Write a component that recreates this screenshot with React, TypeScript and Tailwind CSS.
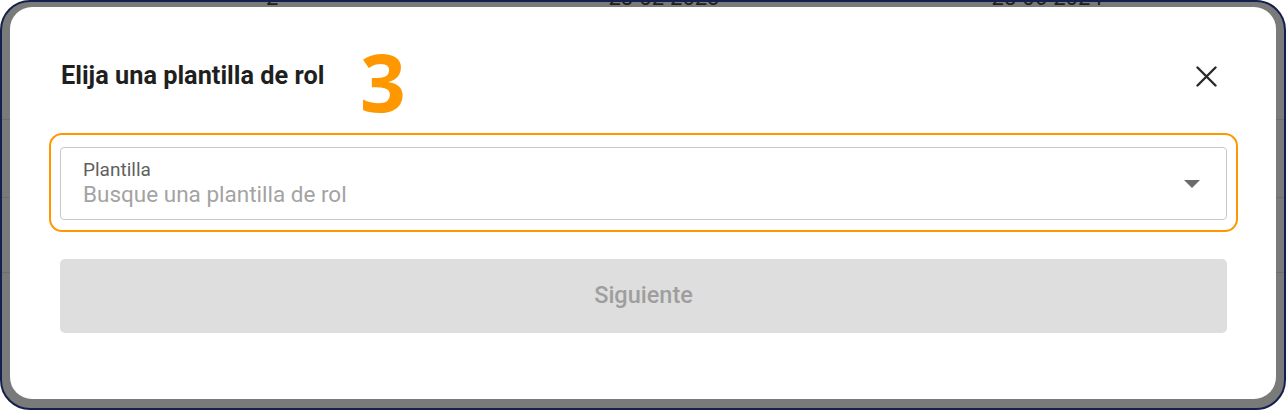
import React from "react";

export default function App() {
  return (
    <div className="h-[410px] w-[1286px] bg-white" style={{ fontFamily: "Roboto, 'Liberation Sans', sans-serif" }}>
      <div className="relative h-[410px] w-[1286px] overflow-hidden rounded-[30px] border-2 border-[#14214c] bg-[#7a7a7a]">
        {/* dimmed page behind the modal */}
        <div className="-mt-[17px] text-[22px] text-[#1e1e1e]">
          <div className="flex h-[25px] items-center leading-[25px]">
            <span className="ml-[258px]">-2</span>
            <span className="ml-[330px]">28-02-2023</span>
            <span className="ml-[272px]">28-06-2024</span>
          </div>
          <div className="h-[110px] border-b border-[#6e6e6e]" />
          <div className="h-[78px] border-b border-[#6e6e6e]" />
          <div className="h-[75px] border-b border-[#6e6e6e]" />
        </div>

        {/* modal */}
        <div className="absolute left-[8px] top-[5px] h-[392px] w-[1266px] rounded-[22px] bg-white">
          <span
            className="absolute left-[350px] top-[34px] text-[80px] font-bold leading-none text-[#ff9800]"
            style={{ fontFamily: "'Open Sans', sans-serif" }}
          >
            3
          </span>
          <div className="flex flex-col pl-[39px] pr-[38px] pt-[55px]">
            <div className="flex h-[28px] items-center justify-between pl-[12px] pr-[21px]">
              <h2 className="text-[25.3px] font-bold leading-[28px] text-[#1f1f1f]">Elija una plantilla de rol</h2>
              <svg width="21" height="21" viewBox="0 0 21 21" className="text-[#2a2a2a]">
                <path d="M1.5 1.5L19.5 19.5M19.5 1.5L1.5 19.5" stroke="currentColor" strokeWidth="2.4" strokeLinecap="round" />
              </svg>
            </div>

            <div className="mt-[43px] rounded-[13px] border-2 border-[#ff9800] px-[9px] pb-[10px] pt-[12px]">
              <div className="flex h-[73px] items-center justify-between rounded-[4px] border border-[#c8c8c8] pl-[22px] pr-[26px]">
                <div className="flex flex-col">
                  <span className="text-[19px] leading-[20px] text-[#5f5f5f]">Plantilla</span>
                  <span className="text-[22.5px] leading-[28px] text-[#a3a3a3]">Busque una plantilla de rol</span>
                </div>
                <svg width="16" height="8" viewBox="0 0 16 8" className="text-[#6b6b6b]">
                  <path d="M0 0H16L8 8Z" fill="currentColor" />
                </svg>
              </div>
            </div>

            <div className="mx-[11px] mt-[27px] flex h-[74px] items-center justify-center rounded-[5px] bg-[#dedede]">
              <span className="text-[23.5px] font-medium text-[#9e9e9e]">Siguiente</span>
            </div>
          </div>
        </div>
      </div>
    </div>
  );
}
